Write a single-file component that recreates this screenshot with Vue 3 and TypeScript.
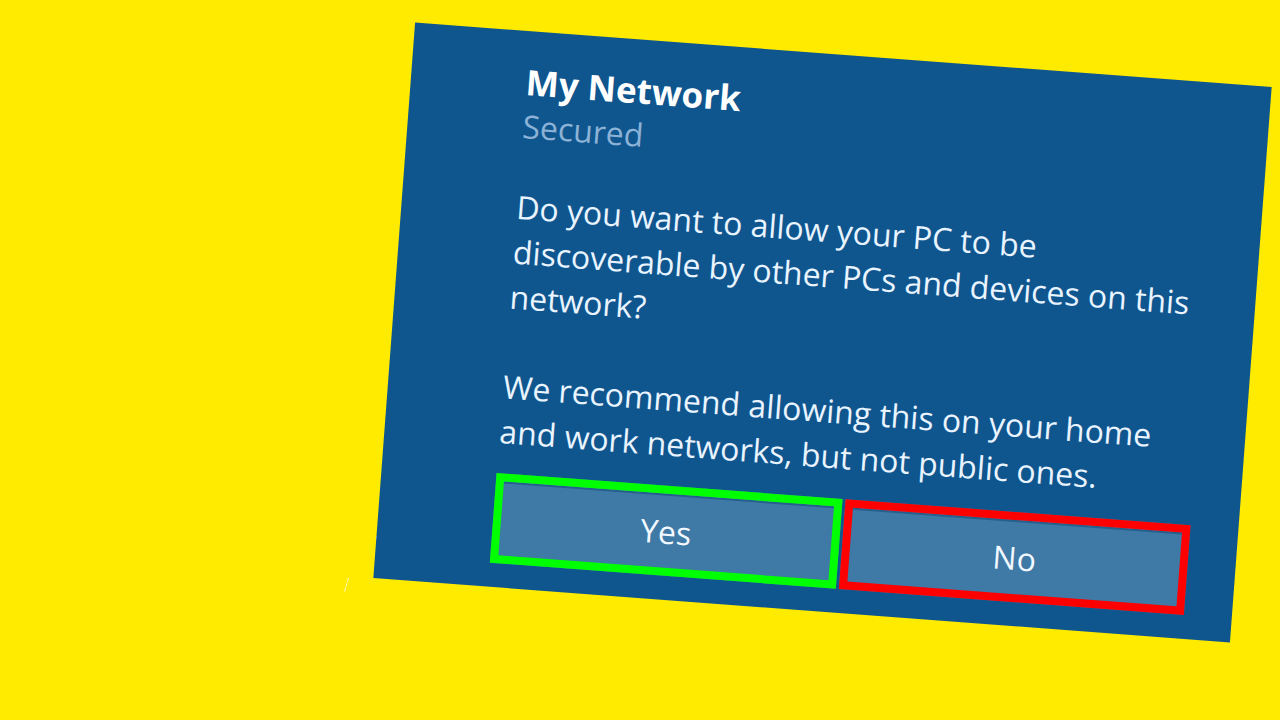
<script setup lang="ts">
interface Choice {
  label: string
  tone: 'accept' | 'decline'
}

const choices: Choice[] = [
  { label: 'Yes', tone: 'accept' },
  { label: 'No', tone: 'decline' },
]
</script>

<template>
  <main class="page">
    <svg class="specks" width="40" height="180" viewBox="0 0 40 180" aria-hidden="true">
      <path d="M8.500 138 L4.500 152" stroke-dasharray="4 1" />
      <path d="M36.500 96 V100" />
    </svg>
    <section class="card" aria-labelledby="network-name">
      <h1 id="network-name" class="name">My Network</h1>
      <p class="status">Secured</p>
      <p class="text">Do you want to allow your PC to be discoverable by other PCs and devices on this network?</p>
      <p class="text">We recommend allowing this on your home and work networks, but not public ones.</p>
      <div class="choices">
        <button
          v-for="choice in choices"
          :key="choice.label"
          type="button"
          class="choice"
          :class="choice.tone"
        >
          {{ choice.label }}
        </button>
      </div>
    </section>
  </main>
</template>

<style>
body {
  margin: 0;
  background: #ffeb00;
}
</style>

<style scoped>
.page {
  position: relative;
  box-sizing: border-box;
  min-height: 100vh;
  padding: 54px 28px 54px;
  display: flex;
  justify-content: flex-end;
  align-items: flex-start;
  overflow: hidden;
  background: #ffeb00;
  font-family: "Open Sans", "Noto Sans", sans-serif;
}

.specks {
  position: absolute;
  left: 340px;
  top: 440px;
  fill: none;
  stroke: #fffbd0;
  stroke-width: 1;
}

.card {
  box-sizing: border-box;
  width: 100%;
  max-width: 859px;
  padding: 29px 48px 24px 115px;
  background: #0f568f;
  color: #e9f4ff;
  transform: rotate(4.3deg);
  font-size: 32px;
  line-height: 45px;
}

.name,
.status,
.text {
  margin: 0;
}

.name {
  color: #ffffff;
  font-size: 35px;
  font-weight: 700;
  line-height: 43px;
}

.status {
  margin-bottom: 36px;
  color: #8cb2d6;
}

.text + .text {
  margin-top: 45px;
}

.choices {
  display: grid;
  grid-template-columns: 1fr 1fr;
  gap: 3px;
  margin-top: 20px;
}

.choice {
  box-sizing: border-box;
  height: 90px;
  padding: 0;
  border: 8px solid;
  border-radius: 0;
  background: #3f79a5;
  color: #f2f8ff;
  box-shadow: inset 0 2px 0 #245f8e;
  font: inherit;
}

.accept {
  border-color: #00ff00;
}

.decline {
  border-color: #ff0000;
}
</style>
